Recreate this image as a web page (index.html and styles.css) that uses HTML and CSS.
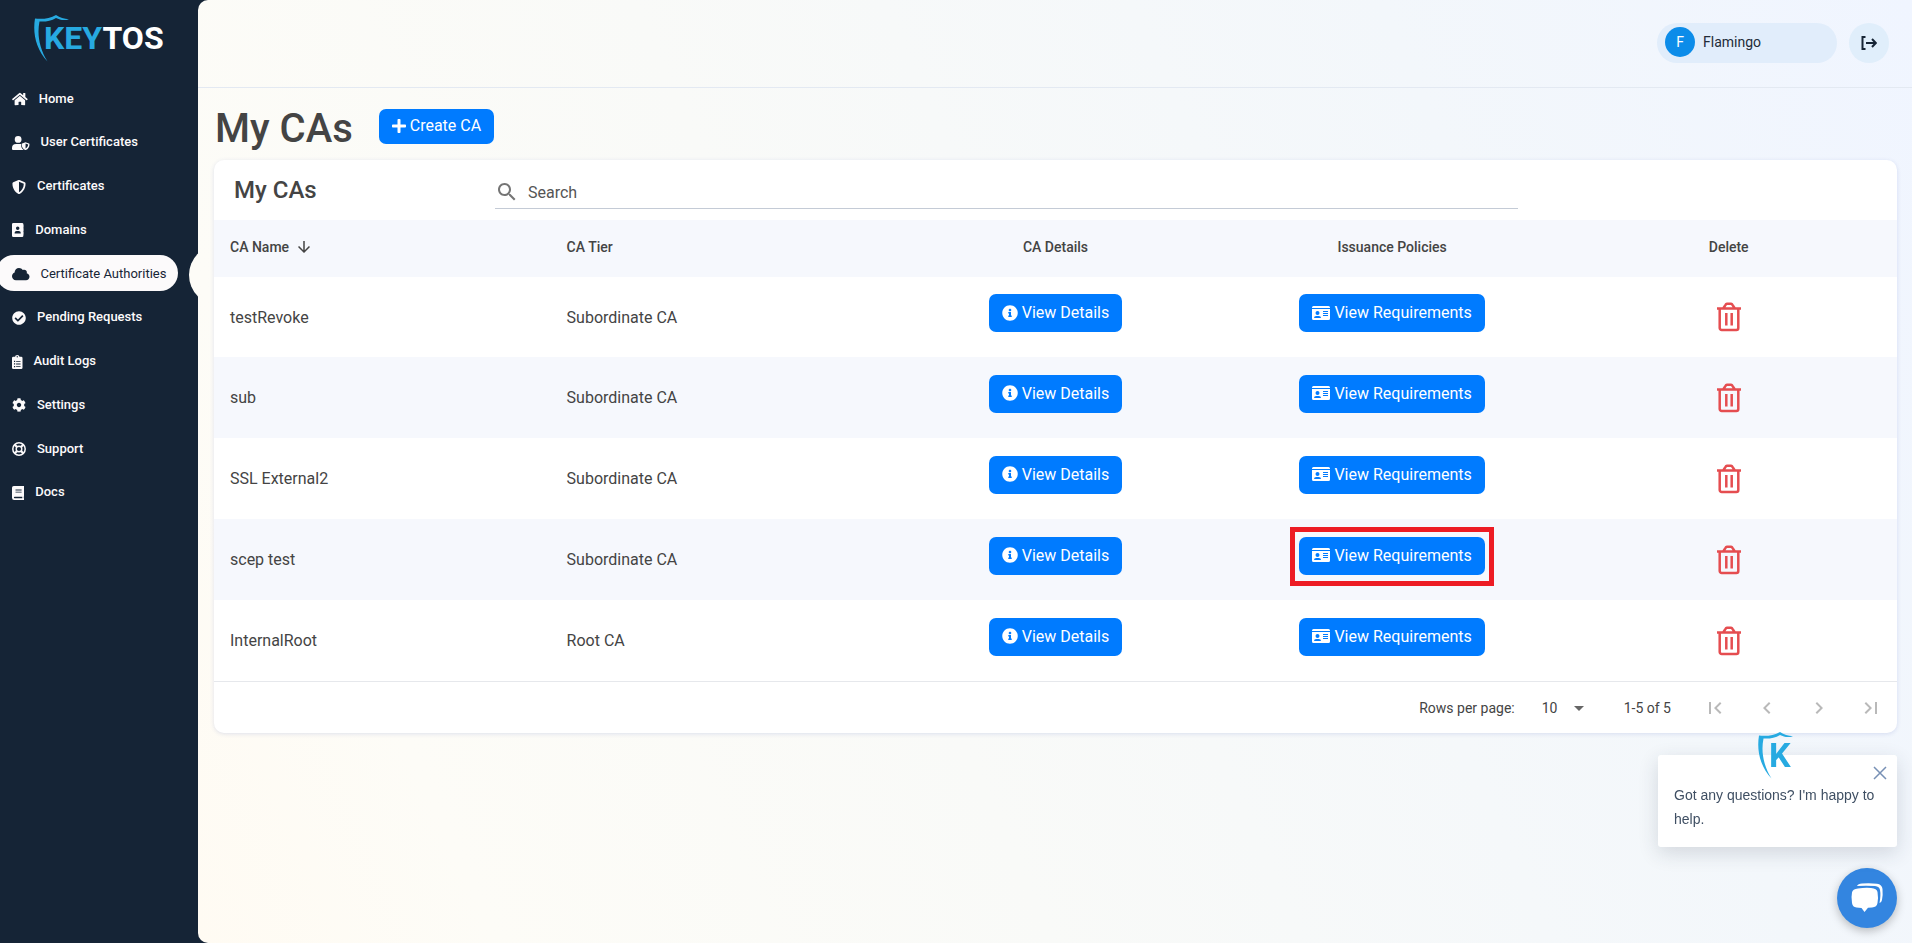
FILE: index.html
```html
<!DOCTYPE html>
<html lang="en">
<head>
<meta charset="utf-8">
<title>Keytos - My CAs</title>
<link rel="stylesheet" href="styles.css">
</head>
<body>
<svg class="sprite" aria-hidden="true">
  <symbol id="shield-mark" viewBox="0 0 36 47">
    <path fill="#27aae1" d="M1 3.500C8 4.500 16 3.500 22 0C26 2.500 30 4 35 4.200C30 6 26 4.800 22 3C17 6 11 7 5.500 6.500C3 19 5 33 13.500 46.500C2 34 -1.500 18 1 3.500Z"/>
  </symbol>
  <symbol id="info" viewBox="0 0 512 512"><path d="M256 8C119.043 8 8 119.083 8 256c0 136.997 111.043 248 248 248s248-111.003 248-248C504 119.083 392.957 8 256 8zm0 110c23.196 0 42 18.804 42 42s-18.804 42-42 42-42-18.804-42-42 18.804-42 42-42zm56 254c0 6.627-5.373 12-12 12h-88c-6.627 0-12-5.373-12-12v-24c0-6.627 5.373-12 12-12h12v-64h-12c-6.627 0-12-5.373-12-12v-24c0-6.627 5.373-12 12-12h64c6.627 0 12 5.373 12 12v100h12c6.627 0 12 5.373 12 12v24z"/></symbol>
  <symbol id="idcard" viewBox="0 0 576 512"><path fill-rule="evenodd" d="M0 80a48 48 0 0 1 48-48H528a48 48 0 0 1 48 48V96H0ZM0 128H576V432a48 48 0 0 1-48 48H48a48 48 0 0 1-48-48ZM176 192a64 64 0 1 0 0 128a64 64 0 1 0 0-128ZM64 416H288a72 64 0 0 0-72-64H136a72 64 0 0 0-72 64ZM352 192V224H512V192ZM352 256V288H512V256ZM352 320V352H512V320Z"/></symbol>
  <symbol id="trash" viewBox="0 0 24 30"><g fill="none" stroke="currentColor" stroke-width="2.500"><path d="M0 6.500H24M2.700 6.500V26A2 2 0 0 0 4.700 28H19.300A2 2 0 0 0 21.300 26V6.500M6.500 6L8.500 2.800A2 2 0 0 1 10 1.800H14A2 2 0 0 1 15.500 2.800L17.500 6M9.300 11V23.500M14.700 11V23.500"/></g></symbol>
</svg>
<div class="app">
  <aside class="sidebar">
    <a class="brand" href="#" aria-label="Keytos">
      <svg class="brand-shield"><use href="#shield-mark"/></svg>
      <span class="brand-name"><span class="brand-key">KEY</span>TOS</span>
    </a>
    <nav class="nav">
      <a class="nav-link" href="#"><svg viewBox="0 0 576 512"><path d="M280.370 148.260L96 300.110V464a16 16 0 0 0 16 16l112.060-.290a16 16 0 0 0 15.920-16V368a16 16 0 0 1 16-16h64a16 16 0 0 1 16 16v95.640a16 16 0 0 0 16 16.050L464 480a16 16 0 0 0 16-16V300L295.670 148.260a12.190 12.190 0 0 0-15.300 0zM571.600 251.470L488 182.560V44.050a12 12 0 0 0-12-12h-56a12 12 0 0 0-12 12v72.610L318.470 43a48 48 0 0 0-61 0L4.340 251.470a12 12 0 0 0-1.600 16.900l25.500 31A12 12 0 0 0 45.150 301l235.220-193.740a12.190 12.190 0 0 1 15.300 0L530.900 301a12 12 0 0 0 16.900-1.600l25.500-31a12 12 0 0 0-1.700-16.930z"/></svg>Home</a>
      <a class="nav-link" href="#"><svg viewBox="0 0 640 512"><path fill-rule="evenodd" d="M224 0a124 124 0 1 0 0 248a124 124 0 1 0 0-248ZM150 290H300C310 290 320 291 330 294V330C330 400 365 470 425 508L420 512H40A40 40 0 0 1 0 472V440A150 150 0 0 1 150 290ZM496 224L622 276C632 280 640 290 640 300C640 400 590 480 506 511C500 513 492 513 486 511C402 480 352 400 352 300C352 290 360 280 370 276ZM496 277V456C550 430 588 375 591 315Z"/></svg>User Certificates</a>
      <a class="nav-link" href="#"><svg viewBox="0 0 512 512"><path d="M466.500 83.700l-192-80a48.150 48.150 0 0 0-36.900 0l-192 80C27.700 91.100 16 108.600 16 128c0 198.500 114.500 335.700 221.500 380.300 11.800 4.900 25.100 4.900 36.900 0C360.100 472.600 496 349.300 496 128c0-19.400-11.700-36.900-29.500-44.300zM256.100 446.300l-.1-381 175.900 73.300c-3.300 151.400-82.100 261.100-175.800 307.700z"/></svg>Certificates</a>
      <a class="nav-link" href="#"><svg viewBox="0 0 448 512"><path fill-rule="evenodd" d="M48 0H368a48 48 0 0 1 48 48V464a48 48 0 0 1-48 48H48a48 48 0 0 1-48-48V48A48 48 0 0 1 48 0ZM208 128a64 64 0 1 0 0 128a64 64 0 1 0 0-128ZM96 384H320V360a72 72 0 0 0-72-72H168a72 72 0 0 0-72 72ZM432 64h16v96h-16ZM432 192h16v96h-16ZM432 320h16v96h-16Z"/></svg>Domains</a>
      <a class="nav-link nav-link-active" href="#" aria-current="page"><svg viewBox="0 0 640 512"><path d="M537.600 226.600c4.100-10.700 6.400-22.400 6.400-34.600 0-53-43-96-96-96-19.700 0-38.100 6-53.300 16.200C367 64.200 315.300 32 256 32c-88.400 0-160 71.600-160 160 0 2.700.1 5.400.2 8.100C40.200 219.800 0 273.200 0 336c0 79.500 64.500 144 144 144h368c70.700 0 128-57.300 128-128 0-61.900-44-113.600-102.400-125.400z"/></svg>Certificate Authorities</a>
      <a class="nav-link" href="#"><svg viewBox="0 0 512 512"><path d="M504 256c0 136.967-111.033 248-248 248S8 392.967 8 256 119.033 8 256 8s248 111.033 248 248zM227.314 387.314l184-184c6.248-6.248 6.248-16.379 0-22.627l-22.627-22.627c-6.248-6.249-16.379-6.249-22.628 0L216 308.118l-70.059-70.059c-6.248-6.248-16.379-6.248-22.628 0l-22.627 22.627c-6.248 6.248-6.248 16.379 0 22.627l104 104c6.249 6.249 16.379 6.249 22.628.001z"/></svg>Pending Requests</a>
      <a class="nav-link" href="#"><svg viewBox="0 0 384 512"><path fill-rule="evenodd" d="M48 64H112A80 64 0 0 1 272 64H336a48 48 0 0 1 48 48V464a48 48 0 0 1-48 48H48a48 48 0 0 1-48-48V112A48 48 0 0 1 48 64ZM192 40a24 24 0 1 0 0 48a24 24 0 1 0 0-48ZM72 210v44h44v-44ZM150 216v32H312V216ZM72 306v44h44v-44ZM150 312v32H312V312ZM72 402v44h44v-44ZM150 408v32H312V408Z"/></svg>Audit Logs</a>
      <a class="nav-link" href="#"><svg viewBox="0 0 512 512"><path d="M487.400 315.700l-42.600-24.600c4.300-23.200 4.300-47 0-70.200l42.600-24.600c4.900-2.800 7.100-8.600 5.500-14-11.100-35.600-30-67.800-54.700-94.600-3.800-4.100-10-5.100-14.800-2.300L380.800 110c-17.900-15.400-38.500-27.300-60.800-35.100V25.800c0-5.600-3.900-10.500-9.400-11.700-36.700-8.200-74.300-7.800-109.200 0-5.500 1.200-9.400 6.100-9.400 11.700V75c-22.200 7.900-42.800 19.800-60.800 35.100L88.700 85.500c-4.900-2.800-11-1.900-14.800 2.300-24.700 26.700-43.600 58.900-54.700 94.600-1.700 5.400.6 11.200 5.500 14L67.300 221c-4.300 23.200-4.300 47 0 70.200l-42.600 24.600c-4.900 2.800-7.100 8.600-5.500 14 11.100 35.600 30 67.800 54.700 94.600 3.800 4.100 10 5.100 14.800 2.300l42.600-24.600c17.900 15.400 38.500 27.300 60.800 35.100v49.200c0 5.600 3.900 10.500 9.400 11.700 36.700 8.200 74.300 7.800 109.200 0 5.500-1.200 9.400-6.100 9.400-11.700v-49.200c22.200-7.900 42.800-19.800 60.800-35.100l42.600 24.600c4.900 2.800 11 1.900 14.800-2.300 24.700-26.700 43.600-58.900 54.700-94.600 1.500-5.500-.7-11.300-5.600-14.100zM256 336c-44.100 0-80-35.900-80-80s35.900-80 80-80 80 35.900 80 80-35.900 80-80 80z"/></svg>Settings</a>
      <a class="nav-link" href="#"><svg viewBox="0 0 14 14"><g fill="none" stroke="currentColor"><circle cx="7" cy="7" r="6.200" stroke-width="1.500"/><circle cx="7" cy="7" r="2.800" stroke-width="1.400"/><path stroke-width="2.200" d="M2.800 2.800L5 5M11.200 2.800L9 5M2.800 11.200L5 9M11.200 11.200L9 9"/></g></svg>Support</a>
      <a class="nav-link" href="#"><svg viewBox="0 0 448 512"><path fill-rule="evenodd" d="M64 0H424a24 24 0 0 1 24 24V360C448 372 440 380 432 384V448H440a24 24 0 0 1 0 64H80a80 80 0 0 1-80-80V64A64 64 0 0 1 64 0ZM128 128V160H352V128ZM128 208V240H352V208ZM96 392a28 28 0 0 0 0 56H376V392Z"/></svg>Docs</a>
    </nav>
    <span class="nav-notch"></span>
  </aside>
  <div class="page">
    <header class="topbar">
      <div class="user"><span class="avatar">F</span><span>Flamingo</span></div>
      <button class="logout" type="button" aria-label="Sign out"><svg viewBox="0 0 16 14"><path fill="none" stroke="currentColor" stroke-width="2" d="M4.500 1H1.500V13H4.500M5 7H14.500M11 3L14.800 7L11 11"/></svg></button>
    </header>
    <main class="content">
      <div class="heading">
        <h1>My CAs</h1>
        <button class="btn btn-create" type="button"><svg viewBox="0 0 448 512"><path d="M416 208H272V64c0-17.670-14.330-32-32-32h-32c-17.670 0-32 14.330-32 32v144H32c-17.670 0-32 14.330-32 32v32c0 17.670 14.330 32 32 32h144v144c0 17.670 14.330 32 32 32h32c17.670 0 32-14.330 32-32V304h144c17.670 0 32-14.330 32-32v-32c0-17.670-14.330-32-32-32z"/></svg>Create CA</button>
      </div>
      <section class="card">
        <div class="card-bar">
          <h2>My CAs</h2>
          <label class="search">
            <svg viewBox="0 0 24 24"><path d="M15.500 14h-.79l-.28-.27C15.410 12.590 16 11.110 16 9.500 16 5.910 13.090 3 9.500 3S3 5.910 3 9.500 5.910 16 9.500 16c1.610 0 3.090-.59 4.230-1.570l.27.28v.79l5 4.990L20.490 19l-4.990-5zm-6 0C7.010 14 5 11.990 5 9.500S7.010 5 9.500 5 14 7.010 14 9.500 11.990 14 9.500 14z"/></svg>
            <input type="text" placeholder="Search" aria-label="Search">
          </label>
        </div>
        <table class="cas">
          <thead>
            <tr>
              <th><span class="sorted">CA Name<svg viewBox="0 0 24 24"><path d="M20 12l-1.410-1.410L13 16.170V4h-2v12.170l-5.580-5.590L4 12l8 8 8-8z"/></svg></span></th>
              <th>CA Tier</th><th class="mid">CA Details</th><th class="mid">Issuance Policies</th><th class="mid">Delete</th>
            </tr>
          </thead>
          <tbody>
            <tr><td>testRevoke</td><td>Subordinate CA</td>
              <td class="mid"><span class="action"><button class="btn" type="button"><svg><use href="#info"/></svg>View Details</button></span></td>
              <td class="mid"><span class="action"><button class="btn" type="button"><svg class="wide"><use href="#idcard"/></svg>View Requirements</button></span></td>
              <td class="mid"><button class="delete" type="button" aria-label="Delete testRevoke"><svg><use href="#trash"/></svg></button></td></tr>
            <tr><td>sub</td><td>Subordinate CA</td>
              <td class="mid"><span class="action"><button class="btn" type="button"><svg><use href="#info"/></svg>View Details</button></span></td>
              <td class="mid"><span class="action"><button class="btn" type="button"><svg class="wide"><use href="#idcard"/></svg>View Requirements</button></span></td>
              <td class="mid"><button class="delete" type="button" aria-label="Delete sub"><svg><use href="#trash"/></svg></button></td></tr>
            <tr><td>SSL External2</td><td>Subordinate CA</td>
              <td class="mid"><span class="action"><button class="btn" type="button"><svg><use href="#info"/></svg>View Details</button></span></td>
              <td class="mid"><span class="action"><button class="btn" type="button"><svg class="wide"><use href="#idcard"/></svg>View Requirements</button></span></td>
              <td class="mid"><button class="delete" type="button" aria-label="Delete SSL External2"><svg><use href="#trash"/></svg></button></td></tr>
            <tr><td>scep test</td><td>Subordinate CA</td>
              <td class="mid"><span class="action"><button class="btn" type="button"><svg><use href="#info"/></svg>View Details</button></span></td>
              <td class="mid"><span class="action action-marked"><button class="btn" type="button"><svg class="wide"><use href="#idcard"/></svg>View Requirements</button></span></td>
              <td class="mid"><button class="delete" type="button" aria-label="Delete scep test"><svg><use href="#trash"/></svg></button></td></tr>
            <tr><td>InternalRoot</td><td>Root CA</td>
              <td class="mid"><span class="action"><button class="btn" type="button"><svg><use href="#info"/></svg>View Details</button></span></td>
              <td class="mid"><span class="action"><button class="btn" type="button"><svg class="wide"><use href="#idcard"/></svg>View Requirements</button></span></td>
              <td class="mid"><button class="delete" type="button" aria-label="Delete InternalRoot"><svg><use href="#trash"/></svg></button></td></tr>
          </tbody>
        </table>
        <footer class="pager">
          <label for="rows">Rows per page:</label>
          <span class="rows">
            <select id="rows"><option>10</option><option>25</option></select>
            <svg viewBox="0 0 24 24"><path d="M7 10l5 5 5-5z"/></svg>
          </span>
          <span class="range">1-5 of 5</span>
          <span class="pages">
            <button type="button" aria-label="First page" disabled><svg viewBox="0 0 24 24"><path d="M18.410 16.590L13.820 12l4.590-4.590L17 6l-6 6 6 6zM6 6h2v12H6z"/></svg></button>
            <button type="button" aria-label="Previous page" disabled><svg viewBox="0 0 24 24"><path d="M15.410 7.410L14 6l-6 6 6 6 1.410-1.410L10.830 12z"/></svg></button>
            <button type="button" aria-label="Next page" disabled><svg viewBox="0 0 24 24"><path d="M10 6L8.590 7.410 13.170 12l-4.580 4.590L10 18l6-6z"/></svg></button>
            <button type="button" aria-label="Last page" disabled><svg viewBox="0 0 24 24"><path d="M5.590 7.410L10.180 12l-4.590 4.590L7 18l6-6-6-6zM16 6h2v12h-2z"/></svg></button>
          </span>
        </footer>
      </section>
    </main>
  </div>
</div>
<div class="chat">
  <div class="chat-bubble">
    <span class="chat-logo"><svg><use href="#shield-mark"/></svg><span>K</span></span>
    <button class="chat-close" type="button" aria-label="Close"><svg viewBox="0 0 14 14"><path fill="none" stroke="currentColor" stroke-width="1.500" d="M1 1L13 13M13 1L1 13"/></svg></button>
    <p>Got any questions? I'm happy to help.</p>
  </div>
  <button class="chat-open" type="button" aria-label="Open chat"><svg viewBox="0 0 32 30"><path fill="#fff" d="M7 5.500Q14 4.500 20 5Q26 5.500 26.500 9Q27.500 15 26.500 20Q26 24 21 24.500L17 24.800L13.500 29L10.500 25L5.500 24.500Q1.500 24 1 20Q0 14 1 9.500Q1.500 6 7 5.500Z"/><path fill="#fff" d="M6 3Q7 .8 11 .5Q20 0 26 .8Q31 1.500 31.500 6Q32 12 31 17Q30.500 19.500 28.500 20Q30 12 29 7Q28.500 3.500 24 3Q15 2.300 6 3Z"/></svg></button>
</div>
</body>
</html>
```

FILE: styles.css
```css
* { box-sizing: border-box; }
body {
  margin: 0;
  font-family: Roboto, "Liberation Sans", sans-serif;
  font-size: 16px;
  color: #444;
  background: #152436;
}
svg { display: block; fill: currentColor; }
button { font: inherit; color: inherit; border: 0; padding: 0; background: none; }
.sprite { position: absolute; width: 0; height: 0; }
.app { display: grid; grid-template-columns: 198px 1fr; min-height: 100vh; }

/* Sidebar */
.sidebar { position: relative; overflow: hidden; }
.brand {
  display: flex;
  align-items: flex-start;
  margin: 15px 0 0 34px;
  height: 47px;
  color: #fff;
  text-decoration: none;
}
.brand-shield { width: 36px; height: 47px; }
.brand-name { margin: 4px 0 0 -26px; font-size: 32px; line-height: 38px; font-weight: 700; }
.brand-key { color: #27aae1; }
.nav {
  display: flex;
  flex-direction: column;
  justify-content: space-between;
  min-height: 430px;
  margin-top: 18px;
}
.nav-link {
  display: flex;
  align-items: center;
  gap: 11px;
  height: 36px;
  width: 182px;
  margin-left: -4px;
  padding-left: 16px;
  border-radius: 18px;
  color: #fcfafb;
  font-size: 13px;
  font-weight: 500;
  text-decoration: none;
  white-space: nowrap;
}
.nav-link svg { height: 14px; width: auto; margin-top: 2px; }
.nav-link-active { background: #fcfafb; color: #172536; font-weight: 400; }
.nav-notch {
  position: absolute;
  left: 189px;
  top: 245px;
  width: 60px;
  height: 60px;
  border-radius: 30px;
  background: #fdfcf7;
}

/* Page */
.page {
  border-radius: 10px 0 0 10px;
  background: linear-gradient(66deg, #fffbf3 0%, #fdfcf7 14%, #f9faf8 40%, #f3f7fb 75%, #f0f5ff 100%);
}
.topbar {
  display: flex;
  justify-content: flex-end;
  align-items: center;
  gap: 12px;
  height: 88px;
  padding: 0 23px 2px 0;
  border-bottom: 1px solid #e3e9f2;
}
.user {
  display: flex;
  align-items: center;
  gap: 8px;
  width: 180px;
  height: 40px;
  padding: 0 0 1px 8px;
  border-radius: 20px;
  background: #e1edfb;
  font-size: 14px;
  color: #222b38;
}
.avatar {
  width: 30px;
  border-radius: 15px;
  background: #0c8ce9;
  color: #fff;
  line-height: 30px;
  text-align: center;
}
.logout {
  display: grid;
  place-items: center;
  width: 40px;
  height: 40px;
  border-radius: 20px;
  background: #e0eefb;
  color: #172536;
}
.logout svg { width: 16px; height: 14px; }
.content { padding: 16px 15px 24px 16px; }
.heading { display: flex; align-items: center; gap: 26px; height: 50px; padding-left: 1px; }
h1, h2 { margin: 0; font-weight: 500; }
h1 { font-size: 40px; line-height: 48px; }
.btn {
  display: inline-flex;
  align-items: center;
  gap: 4px;
  height: 38px;
  padding: 0 13px 1px;
  border-radius: 7px;
  background: #007bff;
  color: #fff;
  font-weight: 400;
  white-space: nowrap;
}
.btn svg { width: 16px; height: 16px; }
.btn .wide { width: 18px; }
.btn-create { height: 35px; margin-bottom: 6px; }
.btn-create svg { width: 14px; }

/* Card */
.card {
  margin-top: 6px;
  border-radius: 10px;
  background: #fff;
  box-shadow: 0 1px 4px rgba(60, 90, 180, .16);
}
.card-bar { display: grid; grid-template-columns: 281fr 1023fr 379fr; height: 60px; }
h2 { padding-left: 20px; font-size: 24px; line-height: 60px; }
.search {
  display: flex;
  align-items: center;
  gap: 9px;
  height: 33px;
  margin-top: 16px;
  border-bottom: 1px solid #c4cbd6;
}
.search svg { width: 24px; height: 24px; color: #757575; }
.search input {
  flex: 1;
  border: 0;
  padding: 0;
  outline: 0;
  background: none;
  font: inherit;
  color: #444;
}
.search input::placeholder { color: #555; opacity: 1; }
.cas { width: 100%; table-layout: fixed; border-collapse: collapse; }
.cas th, .cas td { padding: 0 16px; text-align: left; }
.cas th { height: 57px; padding-bottom: 3px; font-size: 14px; font-weight: 500; }
.cas td { height: 81px; }
.cas tbody tr:first-child td { height: 80px; }
.cas .mid { text-align: center; }
.cas thead tr, .cas tbody tr:nth-child(even) { background: #f6f8fd; }
.sorted { display: inline-flex; align-items: center; gap: 6px; }
.sorted svg { width: 18px; height: 18px; }
.action { position: relative; display: inline-block; margin-bottom: 8px; vertical-align: middle; }
.action .btn { vertical-align: top; }
.action-marked::after {
  content: "";
  position: absolute;
  inset: -10px -9px -11px;
  border: 5px solid #ed1c24;
  pointer-events: none;
}
.delete { display: inline-block; vertical-align: middle; color: #e54d50; }
.delete svg { width: 24px; height: 30px; }
.pager {
  display: flex;
  align-items: center;
  justify-content: flex-end;
  height: 52px;
  border-top: 1px solid #e6e8ec;
  font-size: 14px;
}
.rows { display: flex; align-items: center; margin-left: 27px; }
.rows select {
  appearance: none;
  width: 25px;
  border: 0;
  padding: 0;
  background: none;
  font: inherit;
  color: inherit;
}
.rows svg { width: 24px; height: 24px; margin-right: 33px; color: #666; }
.pages { display: flex; gap: 28px; margin: 0 14px 0 32px; }
.pages button { color: #b9b9b9; }
.pages svg { width: 24px; height: 24px; }

/* Chat */
.chat { position: fixed; right: 15px; bottom: 15px; display: flex; flex-direction: column; align-items: flex-end; gap: 21px; }
.chat-bubble {
  position: relative;
  width: 239px;
  padding: 28px 16px 16px;
  border-radius: 3px;
  background: #fff;
  box-shadow: 0 6px 20px rgba(40, 50, 70, .16);
  color: #3f4f63;
  font: 14px/24px "Liberation Sans", Arial, sans-serif;
}
.chat-bubble p { margin: 0; }
.chat-logo { position: absolute; left: 100px; top: -23px; width: 36px; color: #27aae1; }
.chat-logo svg { width: 36px; height: 47px; }
.chat-logo span { position: absolute; left: 11px; top: 4px; font: 700 34px/38px Roboto, sans-serif; }
.chat-close { position: absolute; right: 10px; top: 11px; color: #7790b5; }
.chat-close svg { width: 14px; height: 14px; }
.chat-open {
  display: grid;
  place-items: center;
  width: 60px;
  height: 60px;
  border-radius: 30px;
  background: #3385e0;
  box-shadow: 0 3px 10px rgba(0, 0, 0, .25);
}
.chat-open svg { width: 32px; height: 30px; }
```
